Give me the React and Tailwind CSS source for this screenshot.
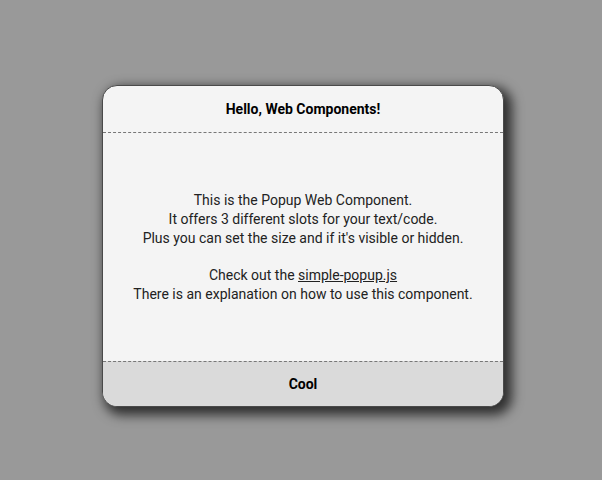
import React from 'react'

const App = () => {
  return (
    <div className="w-[602px] h-[480px] bg-[#999999] pt-[85px] pl-[102px] font-['Roboto',sans-serif]">
      {/* Popup */}
      <div className="w-[402px] h-[322px] flex flex-col rounded-[15px] border border-[#4a4a4a] bg-[#f4f4f4] overflow-hidden shadow-[5px_5px_12px_3px_rgba(0,0,0,0.7)]">
        {/* Header */}
        <div className="h-[47px] flex items-center justify-center border-b border-dashed border-[#777] text-sm font-bold text-black">
          Hello, Web Components!
        </div>

        {/* Body */}
        <div className="flex-1 flex flex-col items-center justify-center text-sm leading-[19px] text-[#222] text-center pt-[1px]">
          <p>This is the Popup Web Component.</p>
          <p>It offers 3 different slots for your text/code.</p>
          <p>Plus you can set the size and if it's visible or hidden.</p>
          <p className="mt-[18px]">
            Check out the <a className="underline">simple-popup.js</a>
          </p>
          <p>There is an explanation on how to use this component.</p>
        </div>

        {/* Footer */}
        <div className="h-[45px] flex items-center justify-center border-t border-dashed border-[#777] bg-[#dadada] text-sm font-bold text-black">
          Cool
        </div>
      </div>
    </div>
  )
}

export default App
